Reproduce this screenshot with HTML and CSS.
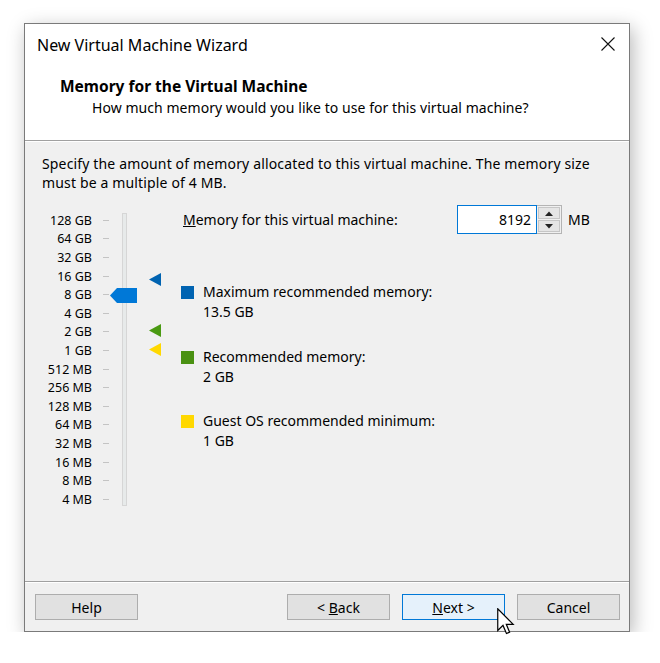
FILE: index.html
```html
<!DOCTYPE html>
<html lang="en">

<head>
    <meta charset="UTF-8" />
    <link rel="stylesheet" href="styles.css">
</head>

<body>
    <div class="window">
        <div class="top">
            <div class="titlebar">
                <span class="title">New Virtual Machine Wizard</span>
                <svg class="close" width="14" height="14" viewBox="0 0 14 14">
                    <path d="M0.5 0.5 L13.5 13.5 M13.5 0.5 L0.5 13.5" stroke="#111" stroke-width="1.1" fill="none" />
                </svg>
            </div>
            <div class="page-head">
                <p class="head-title">Memory for the Virtual Machine</p>
                <p class="head-sub">How much memory would you like to use for this virtual machine?</p>
            </div>
        </div>

        <div class="content">
            <p class="desc">Specify the amount of memory allocated to this virtual machine. The memory size<br />must be a multiple of 4 MB.</p>

            <div class="memory-area">
                <div class="slider">
                    <div class="scale">
                        <div class="scale-row"><span class="scale-label">128 GB</span><span class="tick"></span></div>
                        <div class="scale-row"><span class="scale-label">64 GB</span><span class="tick"></span></div>
                        <div class="scale-row"><span class="scale-label">32 GB</span><span class="tick"></span></div>
                        <div class="scale-row"><span class="scale-label">16 GB</span><span class="tick"></span></div>
                        <div class="scale-row"><span class="scale-label">8 GB</span><span class="tick"></span></div>
                        <div class="scale-row"><span class="scale-label">4 GB</span><span class="tick"></span></div>
                        <div class="scale-row"><span class="scale-label">2 GB</span><span class="tick"></span></div>
                        <div class="scale-row"><span class="scale-label">1 GB</span><span class="tick"></span></div>
                        <div class="scale-row"><span class="scale-label">512 MB</span><span class="tick"></span></div>
                        <div class="scale-row"><span class="scale-label">256 MB</span><span class="tick"></span></div>
                        <div class="scale-row"><span class="scale-label">128 MB</span><span class="tick"></span></div>
                        <div class="scale-row"><span class="scale-label">64 MB</span><span class="tick"></span></div>
                        <div class="scale-row"><span class="scale-label">32 MB</span><span class="tick"></span></div>
                        <div class="scale-row"><span class="scale-label">16 MB</span><span class="tick"></span></div>
                        <div class="scale-row"><span class="scale-label">8 MB</span><span class="tick"></span></div>
                        <div class="scale-row"><span class="scale-label">4 MB</span><span class="tick"></span></div>
                    </div>

                    <div class="track-wrap">
                        <div class="track"></div>
                        <svg class="thumb" width="27" height="15" viewBox="0 0 27 15">
                            <polygon points="0,7.5 7,0 27,0 27,15 7,15" fill="#0078d7" />
                        </svg>
                    </div>

                    <div class="markers">
                        <svg class="marker marker-max" width="12" height="13" viewBox="0 0 12 13">
                            <polygon points="0,6.5 12,0 12,13" fill="#0063b1" />
                        </svg>
                        <svg class="marker marker-rec" width="12" height="13" viewBox="0 0 12 13">
                            <polygon points="0,6.5 12,0 12,13" fill="#4a9a12" />
                        </svg>
                        <svg class="marker marker-min" width="12" height="13" viewBox="0 0 12 13">
                            <polygon points="0,6.5 12,0 12,13" fill="#ffd800" />
                        </svg>
                    </div>
                </div>

                <div class="settings">
                    <div class="size-row">
                        <label class="size-label" for="memSize"><u>M</u>emory for this virtual machine:</label>
                        <div class="spin-box">
                            <input class="spin-input" id="memSize" type="text" value="8192" />
                            <div class="spin-buttons">
                                <div class="spin-btn">
                                    <svg width="8" height="5" viewBox="0 0 8 5"><polygon points="0,5 4,0.5 8,5" fill="#222" /></svg>
                                </div>
                                <div class="spin-btn">
                                    <svg width="8" height="5" viewBox="0 0 8 5"><polygon points="0,0 8,0 4,4.5" fill="#222" /></svg>
                                </div>
                            </div>
                        </div>
                        <span class="unit">MB</span>
                    </div>

                    <div class="legend">
                        <div class="legend-item">
                            <span class="swatch swatch-max"></span>
                            <div class="legend-text">
                                <div>Maximum recommended memory:</div>
                                <div>13.5 GB</div>
                            </div>
                        </div>
                        <div class="legend-item">
                            <span class="swatch swatch-rec"></span>
                            <div class="legend-text">
                                <div>Recommended memory:</div>
                                <div>2 GB</div>
                            </div>
                        </div>
                        <div class="legend-item">
                            <span class="swatch swatch-min"></span>
                            <div class="legend-text">
                                <div>Guest OS recommended minimum:</div>
                                <div>1 GB</div>
                            </div>
                        </div>
                    </div>
                </div>
            </div>
        </div>

        <div class="footer">
            <button class="btn">Help</button>
            <div class="spacer"></div>
            <button class="btn">&lt; <u>B</u>ack</button>
            <button class="btn btn-default"><u>N</u>ext &gt;</button>
            <button class="btn">Cancel</button>
        </div>
    </div>

    <svg class="cursor" width="18" height="27" viewBox="0 0 12 18">
        <path d="M0.5 0.5 L0.5 15 L4 11.6 L6.3 17 L8.4 16.1 L6.2 10.9 L10.8 10.9 Z" fill="#fff" stroke="#000" stroke-width="0.8" stroke-linejoin="miter" />
    </svg>
</body>

</html>
```

FILE: styles.css
```css
body {
    margin: 0;
    background-color: #ffffff;
    font-family: 'Noto Sans', 'Open Sans', sans-serif;
    font-size: 14px;
    color: #000;
}

p {
    margin: 0;
}

.window {
    box-sizing: border-box;
    width: 606px;
    height: 609px;
    margin: 23px 0 0 24px;
    border: 1px solid #7a7a7a;
    background-color: #f0f0f0;
    box-shadow: 3px 5px 18px rgba(0, 0, 0, 0.28);
    display: flex;
    flex-direction: column;
}

.top {
    height: 116px;
    background-color: #fff;
    border-bottom: 1px solid #a0a0a0;
}

.titlebar {
    height: 42px;
    display: flex;
    align-items: center;
    justify-content: space-between;
    padding: 0 14px 0 12px;
}

.title {
    font-size: 16px;
}

.close {
    margin-top: -3px;
}

.page-head {
    padding: 9px 0 0 35px;
    line-height: 22px;
}

.head-title {
    font-weight: bold;
    font-size: 15.5px;
}

.head-sub {
    padding-left: 32px;
    letter-spacing: 0.05px;
}

.content {
    height: 441px;
    border-top: 1px solid #fff;
    border-bottom: 1px solid #a0a0a0;
    padding: 12px 0 0 17px;
    box-sizing: border-box;
}

.desc {
    line-height: 19px;
    letter-spacing: 0.15px;
}

.memory-area {
    display: flex;
    margin-top: 13px;
}

.slider {
    display: flex;
}

.scale {
    padding-top: 6px;
}

.scale-row {
    display: flex;
    align-items: center;
    height: 18.6px;
}

.scale-label {
    width: 50px;
    text-align: right;
    font-size: 12.5px;
}

.tick {
    width: 6px;
    height: 1px;
    margin-left: 11px;
    background-color: #c4c4c4;
}

.track-wrap {
    position: relative;
    margin-left: 13px;
    width: 5px;
}

.track {
    box-sizing: border-box;
    margin-top: 8px;
    width: 5px;
    height: 293px;
    background-color: #e7eaea;
    border: 1px solid #d6d6d6;
}

.thumb {
    position: absolute;
    left: -12px;
    top: 83px;
}

.markers {
    position: relative;
    width: 12px;
    margin-left: 22px;
}

.marker {
    position: absolute;
    left: 0;
}

.marker-max {
    top: 68px;
}

.marker-rec {
    top: 119px;
}

.marker-min {
    top: 138px;
}

.settings {
    margin-left: 20px;
}

.size-row {
    display: flex;
    align-items: center;
    height: 29px;
}

.size-label {
    width: 274px;
    padding-left: 2px;
}

.spin-box {
    display: flex;
    height: 29px;
}

.spin-input {
    box-sizing: border-box;
    width: 80px;
    height: 29px;
    border: 1px solid #0078d7;
    padding: 0 5px 0 0;
    margin: 0;
    text-align: right;
    font-family: inherit;
    font-size: 14px;
    color: #000;
    background-color: #fff;
    outline: none;
}

.spin-buttons {
    box-sizing: border-box;
    width: 25px;
    height: 29px;
    border: 1px solid #b4b4b4;
    border-left: none;
    padding: 1px;
    display: flex;
    flex-direction: column;
    gap: 1px;
    background-color: #f0f0f0;
}

.spin-btn {
    flex: 1;
    display: flex;
    align-items: center;
    justify-content: center;
    background-color: #e5e5e5;
    border: 1px solid #c6c6c6;
}

.unit {
    margin-left: 6px;
}

.legend {
    margin-top: 48px;
    display: flex;
    flex-direction: column;
    gap: 24.5px;
}

.legend-item {
    display: flex;
    line-height: 20px;
}

.swatch {
    width: 13px;
    height: 13px;
    margin-top: 4px;
    margin-right: 9px;
}

.swatch-max {
    background-color: #0063b1;
}

.swatch-rec {
    background-color: #4a9112;
}

.swatch-min {
    background-color: #ffd800;
}

.footer {
    flex: 1;
    border-top: 1px solid #fff;
    display: flex;
    align-items: flex-start;
    gap: 12px;
    padding: 11px 9px 0 10px;
}

.spacer {
    flex: 1;
}

.btn {
    width: 103px;
    height: 26px;
    padding: 0;
    font-family: inherit;
    font-size: 14px;
    color: #000;
    background-color: #e1e1e1;
    border: 1px solid #adadad;
}

.btn-default {
    background-color: #e5f1fb;
    border-color: #0078d7;
}

.cursor {
    position: absolute;
    left: 497px;
    top: 608px;
}
```
